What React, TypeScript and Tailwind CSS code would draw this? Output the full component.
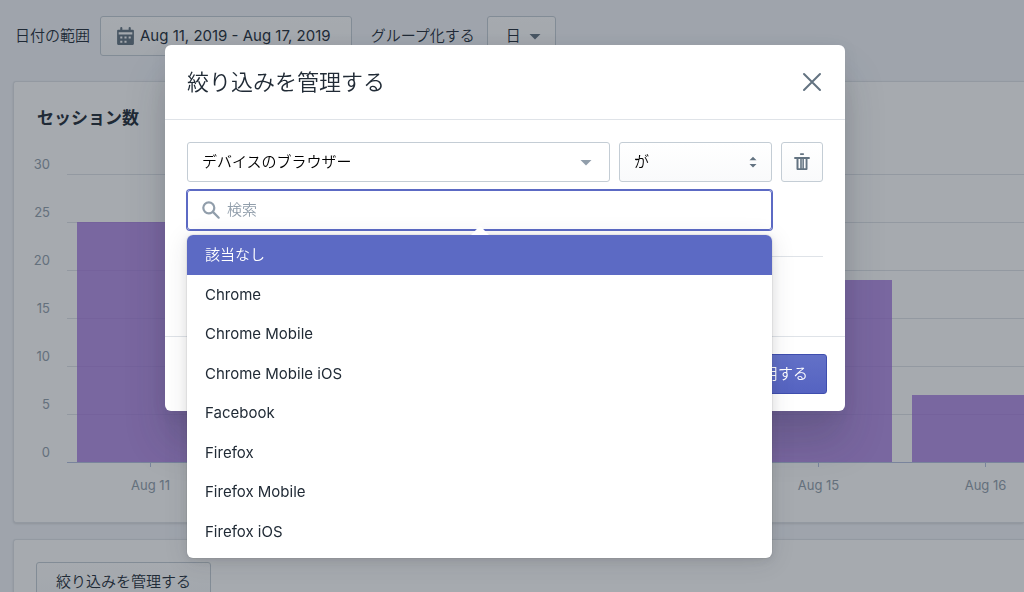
import React from "react";

const browsers = [
  "該当なし",
  "Chrome",
  "Chrome Mobile",
  "Chrome Mobile iOS",
  "Facebook",
  "Firefox",
  "Firefox Mobile",
  "Firefox iOS",
];

const ticks = [30, 25, 20, 15, 10, 5, 0];

const sessions = [
  { day: "Aug 11", count: 25 },
  { day: "Aug 12", count: 14 },
  { day: "Aug 13", count: 11 },
  { day: "Aug 14", count: 16 },
  { day: "Aug 15", count: 19 },
  { day: "Aug 16", count: 7 },
];

const iconPaths = {
  calendar:
    "M3 3.5h2V2a1 1 0 0 1 2 0v1.500h6V2a1 1 0 0 1 2 0v1.500h2a1 1 0 0 1 1 1V17a1 1 0 0 1-1 1H3a1 1 0 0 1-1-1V4.500a1 1 0 0 1 1-1zM3.500 6v2h13V6zM5 10v2h2v-2zm4 0v2h2v-2zm4 0v2h2v-2zM5 14v2h2v-2zm4 0v2h2v-2z",
  caret: "M4.500 8L10 13.500 15.500 8z",
  updown: "M13.500 8.200L10 4.700 6.500 8.200zM13.500 12L10 15.500 6.500 12z",
  search:
    "M8 12a4 4 0 1 1 0-8 4 4 0 0 1 0 8m9.707 4.293l-4.820-4.820A5.968 5.968 0 0 0 14 8 6 6 0 0 0 2 8a6 6 0 0 0 6 6 5.968 5.968 0 0 0 3.473-1.113l4.820 4.820a.997.997 0 0 0 1.414 0 .999.999 0 0 0 0-1.414",
  trash:
    "M17 5H3a.9.9 0 0 0 0 1.900h1.500V17a1 1 0 0 0 1 1h9a1 1 0 0 0 1-1V6.900H17A.9.9 0 0 0 17 5zM8.800 3a.9.9 0 0 1 0-1.800h2.400a.9.9 0 0 1 0 1.800zM6.500 7v9.200h1.700V7zM9.800 7v9.200h.6V7zM11.900 7v9.200h1.700V7z",
};

interface IconProps {
  name: keyof typeof iconPaths;
  className?: string;
}

function Icon({ name, className = "" }: IconProps): React.JSX.Element {
  return (
    <svg viewBox="0 0 20 20" fill="currentColor" className={`shrink-0 ${className}`} aria-hidden="true">
      <path d={iconPaths[name]} fillRule="evenodd" />
    </svg>
  );
}

function Toolbar(): React.JSX.Element {
  return (
    <div className="flex h-10 items-center">
      <span id="range-label" className="ml-0.5 w-[85px] font-[350]">日付の範囲</span>
      <button
        aria-labelledby="range-label"
        className="flex h-10 items-center gap-1 rounded-[3px] border border-[#c4cdd5] bg-gradient-to-b from-white to-[#f9fafb] pr-5 pl-3.5"
      >
        <Icon name="calendar" className="size-[21px] text-[#637381]" />
        Aug 11, 2019 - Aug 17, 2019
      </button>
      <span id="group-label" className="mr-3 ml-[19px] font-[350]">グループ化する</span>
      <button
        aria-labelledby="group-label"
        className="flex h-10 items-center gap-1 rounded-[3px] border border-[#c4cdd5] bg-gradient-to-b from-white to-[#f9fafb] pr-2.5 pl-[18px] font-[350]"
      >
        日
        <Icon name="caret" className="size-5 text-[#637381]" />
      </button>
    </div>
  );
}

function SessionsChart(): React.JSX.Element {
  return (
    <div className="flex gap-[17px] text-[13px] text-[#919eab]">
      <div className="w-[17px] text-right">
        {ticks.map((tick) => (
          <div key={tick} className="flex h-12 items-center justify-end">
            {tick}
          </div>
        ))}
      </div>
      <div className="min-w-0 flex-1 overflow-hidden pt-[33px]">
        <div className="grid">
          <div className="col-start-1 row-start-1">
            {ticks.slice(1).map((tick) => (
              <div key={tick} className="h-12 border-t border-[#dfe3e8]" />
            ))}
            <div className="border-t border-[#b4c0e0]" />
          </div>
          <div className="col-start-1 row-start-1 flex">
            {sessions.map(({ day, count }) => (
              <div key={day} className="flex w-[167px] shrink-0 flex-col items-center">
                <div className="flex h-[288px] w-full items-end pl-2.5">
                  <div
                    className="w-[147px] bg-[#9c6ade]/75"
                    style={{ height: `${(count / 30) * 100}%` }}
                  />
                </div>
                <div className="mt-px h-1 w-px bg-[#b4c0e0]" />
                <div className="mt-2 leading-5">{day}</div>
              </div>
            ))}
          </div>
        </div>
      </div>
    </div>
  );
}

function BrowserPopover(): React.JSX.Element {
  return (
    <div className="absolute inset-x-0 top-full mt-[5px] rounded-md bg-white pb-[7px] shadow-[0_0_0_1px_rgba(39,44,48,0.05),0_2px_7px_1px_rgba(39,44,48,0.08),0_4px_24px_rgba(39,44,48,0.12)]">
      <svg viewBox="0 0 18 9" className="absolute bottom-full left-1/2 h-[9px] w-[18px] -translate-x-1/2" aria-hidden="true">
        <path d="M0 9L7.6 1.2Q9 0 10.4 1.2L18 9z" fill="#fff" />
      </svg>
      <ul id="browser-list" role="listbox" aria-label="デバイスのブラウザー" className="grid h-[316px] auto-rows-fr">
        {browsers.map((name, i) => (
          <li
            key={name}
            role="option"
            aria-selected={i === 0}
            className="flex items-center px-[18px] pt-px first:rounded-t-md aria-selected:bg-[#5c6ac4] aria-selected:font-[350] aria-selected:text-white"
          >
            {name}
          </li>
        ))}
      </ul>
    </div>
  );
}

function FilterModal(): React.JSX.Element {
  return (
    <div
      role="dialog"
      aria-labelledby="modal-title"
      className="w-full max-w-[680px] rounded-md bg-white shadow-[0_31px_41px_rgba(32,42,53,0.2),0_2px_16px_rgba(32,42,54,0.08)]"
    >
      <header className="flex h-[75px] items-center justify-between border-b border-[#dfe3e8] px-[22px]">
        <h2 id="modal-title" className="text-[22px] leading-7 font-[350]">絞り込みを管理する</h2>
        <button aria-label="閉じる" className="text-[#637381]">
          <svg viewBox="0 0 22 22" className="size-[22px]" fill="none" stroke="currentColor" strokeWidth="2" strokeLinecap="round" aria-hidden="true">
            <path d="M3 3l16 16M19 3L3 19" />
          </svg>
        </button>
      </header>

      <div className="border-b border-[#dfe3e8] px-[22px] pt-[22px] pb-[79px]">
        <div className="flex gap-[9px]">
          <div className="grid min-w-0 flex-1 items-center">
            <select
              aria-label="絞り込みの項目"
              className="col-start-1 row-start-1 h-10 w-full appearance-none rounded-[3px] border border-[#c4cdd5] bg-white px-3.5 font-[350] text-black"
            >
              <option>デバイスのブラウザー</option>
            </select>
            <Icon name="caret" className="pointer-events-none col-start-1 row-start-1 mr-3.5 size-5 justify-self-end text-[#919eab]" />
          </div>
          <div className="grid w-[153px] items-center">
            <select
              aria-label="条件"
              className="col-start-1 row-start-1 h-10 w-full appearance-none rounded-[3px] border border-[#c4cdd5] bg-gradient-to-b from-white to-[#f9fafb] px-3.5 font-[350] text-black"
            >
              <option>が</option>
            </select>
            <Icon name="updown" className="pointer-events-none col-start-1 row-start-1 mr-[9px] size-5 justify-self-end text-[#637381]" />
          </div>
          <button
            aria-label="削除"
            className="flex h-10 w-[42px] items-center justify-center rounded-[3px] border border-[#c4cdd5] bg-gradient-to-b from-white to-[#f9fafb] text-[#637381]"
          >
            <Icon name="trash" className="size-5" />
          </button>
        </div>

        <div className="relative mt-2 mr-[51px]">
          <label className="flex h-10 items-center gap-[5px] rounded-[3px] border border-[#5c6ac4] px-3 shadow-[0_0_0_1px_#5c6ac4]">
            <Icon name="search" className="size-[22px] text-[#919eab]" />
            <input
              type="text"
              aria-label="検索"
              aria-controls="browser-list"
              placeholder="検索"
              className="min-w-0 flex-1 font-[350] outline-none placeholder:text-[#919eab]"
            />
          </label>
          <BrowserPopover />
        </div>

        <hr className="mt-[26px] border-[#dfe3e8]" />
      </div>

      <footer className="flex justify-end py-[17px] pr-[18px]">
        <button className="h-10 rounded-[3px] border border-[#3f4eae] bg-gradient-to-b from-[#6371c7] to-[#5563c1] px-[18px] font-[350] text-white">
          適用する
        </button>
      </footer>
    </div>
  );
}

export default function App(): React.JSX.Element {
  return (
    <div className="h-screen overflow-hidden bg-[#f4f6fb] font-['Inter','Noto_Sans_CJK_JP',sans-serif] text-[15px] text-[#212b36]">
      <main className="pt-4 pl-[13px]">
        <Toolbar />
        <section className="mt-[25px] rounded-l-[3px] border border-r-0 border-[#dfe3e8] bg-white pt-6 pb-[27px] pl-[19px] shadow-sm">
          <h1 className="pl-1 text-[17px] leading-6 font-bold">セッション数</h1>
          <div className="mt-[11px]">
            <SessionsChart />
          </div>
        </section>
        <section className="mt-4 rounded-l-[3px] border border-r-0 border-[#dfe3e8] bg-white px-[22px] py-[22px] shadow-sm">
          <button className="h-10 rounded-[3px] border border-[#c4cdd5] bg-gradient-to-b from-white to-[#f9fafb] px-[19px] font-[350]">
            絞り込みを管理する
          </button>
        </section>
      </main>

      <div className="fixed inset-0 flex items-start justify-center bg-[#212b36]/40 pt-[45px] pr-[14px]">
        <FilterModal />
      </div>
    </div>
  );
}
